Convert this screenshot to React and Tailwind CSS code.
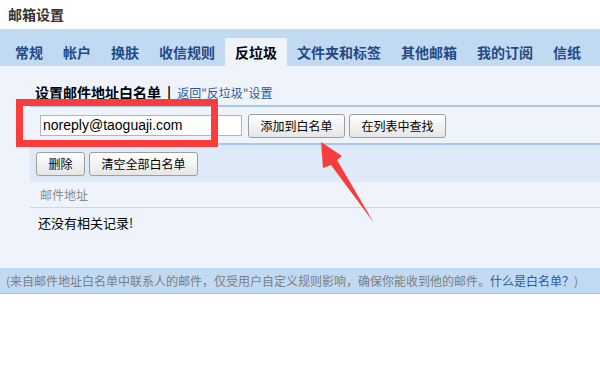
const tabs = ['常规', '帐户', '换肤', '收信规则', '反垃圾', '文件夹和标签', '其他邮箱', '我的订阅', '信纸'];

const Btn = ({ children, w }) => (
  <button className={`h-[24px] ${w} rounded-[3px] border border-[#9e9e9e] bg-gradient-to-b from-white to-[#e6e6e6] text-[12px] text-black leading-none`}>
    {children}
  </button>
);

export default function App() {
  return (
    <div className="relative w-[600px] h-[379px] bg-white overflow-hidden font-['Noto_Sans_CJK_SC','Microsoft_YaHei',sans-serif]">
      <div className="h-[29px] flex items-center pl-[8px] text-[14px] font-bold text-[#333]">邮箱设置</div>

      <div className="h-[37px] bg-[#c2d9f2] flex items-end pl-[5px]">
        {tabs.map((t) => (
          <div
            key={t}
            className={`h-[28px] px-[10px] flex items-center text-[14px] font-bold whitespace-nowrap ${t === '反垃圾' ? 'bg-[#eff4fc] text-black' : 'text-[#1f4a86]'}`}
          >
            {t}
          </div>
        ))}
      </div>

      <div className="h-[202px] bg-[#eff4fc]">
        <div className="h-[39px] flex items-end pb-[2px] pl-[35px]">
          <span className="text-[14px] font-bold text-black">设置邮件地址白名单</span>
          <span className="mx-[6px] text-[14px] font-bold text-black">|</span>
          <a className="text-[12px] text-[#2b5a9b] mb-[1px]">返回"反垃圾"设置</a>
        </div>

        <div className="ml-[30px] border-t-2 border-[#a9c7ea]">
          <div className="h-[38px] flex items-center pl-[10px] border-b-2 border-[#a9c7ea]">
            <div className="w-[202px] h-[21px] bg-white border border-[#b5b5b5] flex items-center pl-[2px] text-[14px] text-black font-['Liberation_Sans',Arial,sans-serif]">
              noreply@taoguaji.com
            </div>
            <div className="ml-[6px]"><Btn w="w-[97px]">添加到白名单</Btn></div>
            <div className="ml-[4px]"><Btn w="w-[97px]">在列表中查找</Btn></div>
          </div>

          <div className="h-[37px] bg-[#dfeaf8] flex items-center pl-[6px] gap-[4px]">
            <Btn w="w-[49px]">删除</Btn>
            <Btn w="w-[109px]">清空全部白名单</Btn>
          </div>

          <div className="h-[26px] flex items-center pl-[10px] text-[12px] text-[#8a8a8a] border-b border-[#c9d7e8]">邮件地址</div>

          <div className="h-[30px] flex items-center pl-[8px] text-[13px] text-black">还没有相关记录!</div>
        </div>
      </div>

      <div className="h-[26px] bg-[#c2d9f2] border-b border-[#a7c2e3] flex items-center pl-[6px] text-[12px] text-[#7d7d7d] whitespace-nowrap">
        (来自邮件地址白名单中联系人的邮件，仅受用户自定义规则影响，确保你能收到他的邮件。<span className="text-[#2b5a9b]">什么是白名单？</span>)
      </div>

      <div className="absolute left-[16px] top-[99px] w-[202px] h-[48px] border-[7px] border-[#fa3c3c]" />

      <svg className="absolute left-0 top-0" width="600" height="379" viewBox="0 0 600 379">
        <polygon points="321,142 342,156 337,160 374,223 331,165 323,168" fill="#f73d3d" />
      </svg>
    </div>
  );
}
